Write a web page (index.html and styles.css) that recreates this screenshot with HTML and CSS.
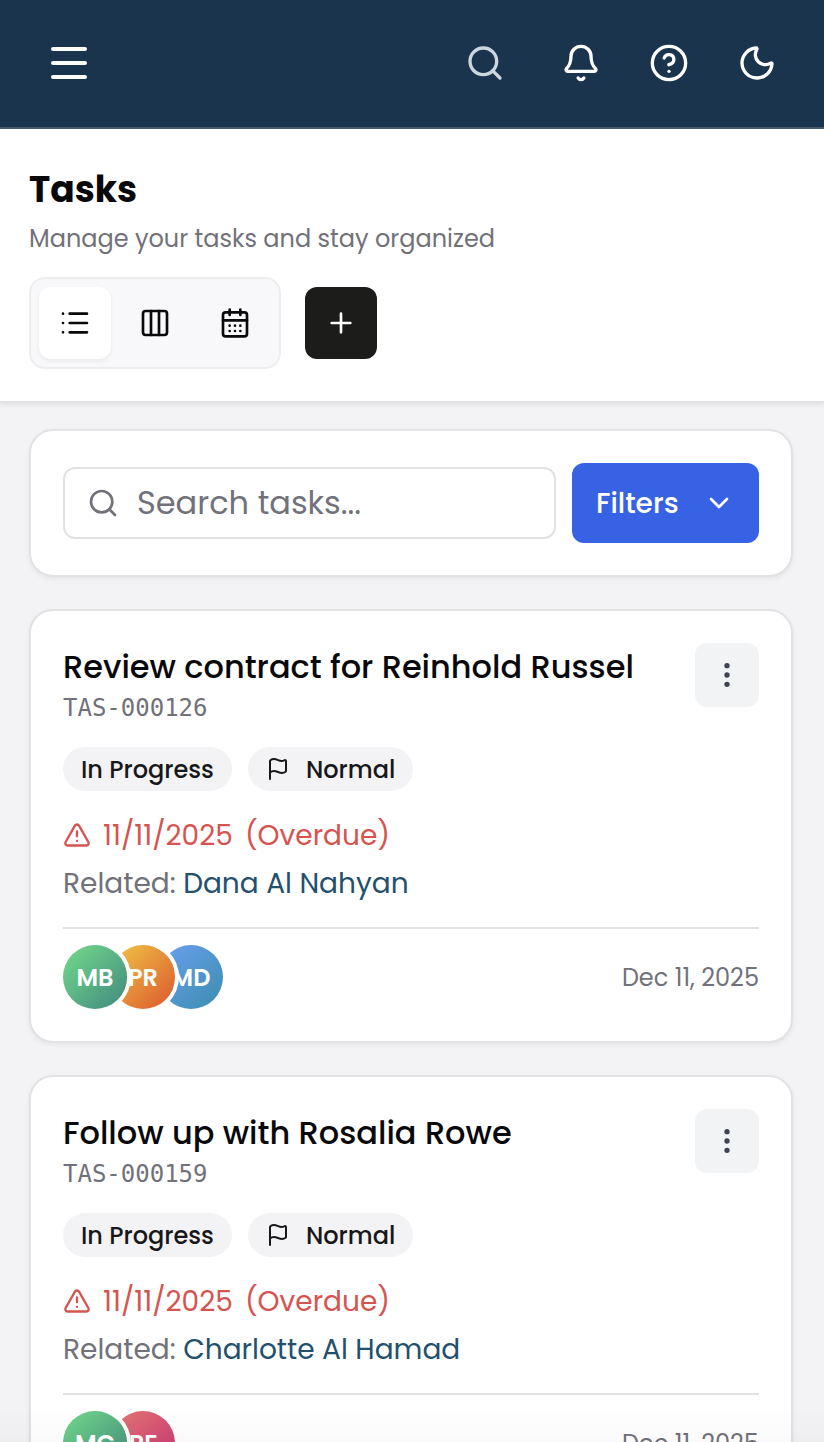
FILE: index.html
```
<!DOCTYPE html>
<html lang="en">
  <head>
    <meta charset="UTF-8" />
    <meta name="viewport" content="width=device-width, initial-scale=1.0" />
    <title>Tasks</title>
    <link rel="stylesheet" href="styles.css">
  </head>
  <body>
    <header class="topbar">
      <button class="menu-toggle" aria-label="Menu">
        <span></span>
        <span></span>
        <span></span>
      </button>
      <div class="topbar-actions">
        <button class="search-btn" aria-label="Search">
          <svg class="icon icon-lg" viewBox="0 0 24 24"><circle cx="11" cy="11" r="8" /><path d="m21 21-4.3-4.3" /></svg>
        </button>
        <button aria-label="Notifications">
          <svg class="icon icon-lg" viewBox="0 0 24 24"><path d="M10.268 21a2 2 0 0 0 3.464 0" /><path d="M3.262 15.326A1 1 0 0 0 4 17h16a1 1 0 0 0 .74-1.673C19.41 13.956 18 12.499 18 8A6 6 0 0 0 6 8c0 4.499-1.411 5.956-2.738 7.326" /></svg>
        </button>
        <button aria-label="Help">
          <svg class="icon icon-lg" viewBox="0 0 24 24"><circle cx="12" cy="12" r="10" /><path d="M9.09 9a3 3 0 0 1 5.83 1c0 2-3 3-3 3" /><path d="M12 17h.01" /></svg>
        </button>
        <button aria-label="Dark mode">
          <svg class="icon icon-lg" viewBox="0 0 24 24"><path d="M20.985 12.486a9 9 0 1 1-9.473-9.472c.405-.022.617.46.402.803a6 6 0 0 0 8.268 8.268c.344-.215.825-.004.803.401" /></svg>
        </button>
      </div>
    </header>

    <section class="page-header">
      <h1>Tasks</h1>
      <p class="subtitle">Manage your tasks and stay organized</p>
      <div class="toolbar">
        <div class="view-switch">
          <button class="active" aria-label="List">
            <svg class="icon" viewBox="0 0 24 24"><path d="M3 5h.01M3 12h.01M3 19h.01M8 5h13M8 12h13M8 19h13" /></svg>
          </button>
          <button aria-label="Board">
            <svg class="icon" viewBox="0 0 24 24"><rect width="18" height="18" x="3" y="3" rx="2" /><path d="M9 3v18M15 3v18" /></svg>
          </button>
          <button aria-label="Calendar">
            <svg class="icon" viewBox="0 0 24 24"><path d="M8 2v4M16 2v4" /><rect width="18" height="18" x="3" y="4" rx="2" /><path d="M3 10h18M8 14h.01M12 14h.01M16 14h.01M8 18h.01M12 18h.01M16 18h.01" /></svg>
          </button>
        </div>
        <button class="add-btn" aria-label="Add task">
          <svg class="icon" viewBox="0 0 24 24"><path d="M5 12h14M12 5v14" /></svg>
        </button>
      </div>
    </section>

    <main class="content">
      <div class="card filter-card">
        <div class="search-box">
          <svg class="icon" viewBox="0 0 24 24"><circle cx="11" cy="11" r="8" /><path d="m21 21-4.3-4.3" /></svg>
          <span>Search tasks...</span>
        </div>
        <button class="filters-btn">
          <span>Filters</span>
          <svg class="icon" viewBox="0 0 24 24"><path d="m6 9 6 6 6-6" /></svg>
        </button>
      </div>

      <article class="card">
        <div class="card-head">
          <div>
            <h2>Review contract for Reinhold Russel</h2>
            <p class="task-id">TAS-000126</p>
          </div>
          <button class="more-btn" aria-label="More">
            <svg class="icon" viewBox="0 0 24 24"><circle cx="12" cy="12" r="1" /><circle cx="12" cy="5" r="1" /><circle cx="12" cy="19" r="1" /></svg>
          </button>
        </div>
        <div class="badges">
          <span class="badge">In Progress</span>
          <span class="badge">
            <svg class="icon icon-sm" viewBox="0 0 24 24"><path d="M4 22V4a1 1 0 0 1 .4-.8A6 6 0 0 1 8 2c3 0 5 2 7.333 2q2 0 3.067-.8A1 1 0 0 1 20 4v10a1 1 0 0 1-.4.8A6 6 0 0 1 16 16c-3 0-5-2-8-2a6 6 0 0 0-4 1.528" /></svg>
            Normal
          </span>
        </div>
        <div class="due">
          <svg class="icon" viewBox="0 0 24 24"><path d="m21.73 18-8-14a2 2 0 0 0-3.48 0l-8 14A2 2 0 0 0 4 21h16a2 2 0 0 0 1.73-3" /><path d="M12 9v4M12 17h.01" /></svg>
          <span>11/11/2025</span>
          <span>(Overdue)</span>
        </div>
        <p class="related">Related: <a>Dana Al Nahyan</a></p>
        <div class="card-foot">
          <div class="avatars">
            <span class="avatar green">MB</span>
            <span class="avatar orange">PR</span>
            <span class="avatar blue">MD</span>
          </div>
          <span class="date">Dec 11, 2025</span>
        </div>
      </article>

      <article class="card">
        <div class="card-head">
          <div>
            <h2>Follow up with Rosalia Rowe</h2>
            <p class="task-id">TAS-000159</p>
          </div>
          <button class="more-btn" aria-label="More">
            <svg class="icon" viewBox="0 0 24 24"><circle cx="12" cy="12" r="1" /><circle cx="12" cy="5" r="1" /><circle cx="12" cy="19" r="1" /></svg>
          </button>
        </div>
        <div class="badges">
          <span class="badge">In Progress</span>
          <span class="badge">
            <svg class="icon icon-sm" viewBox="0 0 24 24"><path d="M4 22V4a1 1 0 0 1 .4-.8A6 6 0 0 1 8 2c3 0 5 2 7.333 2q2 0 3.067-.8A1 1 0 0 1 20 4v10a1 1 0 0 1-.4.8A6 6 0 0 1 16 16c-3 0-5-2-8-2a6 6 0 0 0-4 1.528" /></svg>
            Normal
          </span>
        </div>
        <div class="due">
          <svg class="icon" viewBox="0 0 24 24"><path d="m21.73 18-8-14a2 2 0 0 0-3.48 0l-8 14A2 2 0 0 0 4 21h16a2 2 0 0 0 1.73-3" /><path d="M12 9v4M12 17h.01" /></svg>
          <span>11/11/2025</span>
          <span>(Overdue)</span>
        </div>
        <p class="related">Related: <a>Charlotte Al Hamad</a></p>
        <div class="card-foot">
          <div class="avatars">
            <span class="avatar green">MC</span>
            <span class="avatar pink">RF</span>
          </div>
          <span class="date">Dec 11, 2025</span>
        </div>
      </article>
    </main>
    <div class="bottom-fade"></div>
  </body>
</html>
```
FILE: styles.css
```
* {
  box-sizing: border-box;
  margin: 0;
  padding: 0;
}
body {
  height: 1442px;
  overflow: hidden;
  background-color: #f3f3f5;
  color: #09090b;
  font-family: Poppins, Inter, sans-serif;
}
button {
  display: flex;
  align-items: center;
  justify-content: center;
  border: none;
  background: none;
  color: inherit;
  font: inherit;
  cursor: pointer;
}
.icon {
  width: 32px;
  height: 32px;
  flex-shrink: 0;
  fill: none;
  stroke: currentColor;
  stroke-width: 2;
  stroke-linecap: round;
  stroke-linejoin: round;
}
.icon-lg {
  width: 40px;
  height: 40px;
}
.icon-sm {
  width: 24px;
  height: 24px;
}

/* top bar */
.topbar {
  display: flex;
  align-items: center;
  justify-content: space-between;
  height: 129px;
  padding: 0 31px 2px 33px;
  background-color: #1a344e;
  border-bottom: 2px solid #485a6b;
  color: white;
}
.menu-toggle {
  flex-direction: column;
  gap: 10px;
  width: 72px;
  height: 72px;
}
.menu-toggle span {
  width: 36px;
  height: 4px;
  border-radius: 2px;
  background-color: white;
}
.topbar-actions {
  display: flex;
  gap: 16px;
}
.topbar-actions button {
  width: 72px;
  height: 72px;
}
.topbar-actions .search-btn {
  margin-right: 8px;
  color: #ccd6df;
}

/* page header */
.page-header {
  height: 274px;
  padding: 37px 29px 32px;
  background-color: white;
  border-bottom: 2px solid #e2e2e4;
  box-shadow: 0 2px 5px rgba(0, 0, 0, 0.07);
}
h1 {
  font-size: 36px;
  line-height: 48px;
  font-weight: 700;
}
.subtitle {
  margin-top: 7px;
  color: #71717a;
  font-size: 24px;
  line-height: 35px;
}
.toolbar {
  display: flex;
  align-items: center;
  gap: 24px;
  margin-top: 21px;
}
.view-switch {
  display: flex;
  gap: 8px;
  padding: 8px;
  background-color: #f8f8fb;
  border: 2px solid #ededf0;
  border-radius: 16px;
}
.view-switch button,
.add-btn {
  width: 72px;
  height: 72px;
  border-radius: 12px;
}
.view-switch .active {
  background-color: white;
  box-shadow: 0 2px 4px rgba(0, 0, 0, 0.06);
}
.add-btn {
  background-color: #1c1c1a;
  color: white;
}

/* cards */
.content {
  display: flex;
  flex-direction: column;
  gap: 32px;
  padding: 26px 31px 0 29px;
}
.card {
  padding: 32px;
  background-color: white;
  border: 2px solid #e2e2e5;
  border-radius: 24px;
  box-shadow: 0 2px 5px rgba(0, 0, 0, 0.06);
}
.filter-card {
  display: flex;
  align-items: center;
  gap: 16px;
}
.search-box {
  display: flex;
  flex: 1;
  align-items: center;
  gap: 18px;
  height: 72px;
  padding: 0 22px;
  border: 2px solid #e2e2e5;
  border-radius: 12px;
  color: #71717a;
  font-size: 32px;
}
.filters-btn {
  justify-content: space-between;
  width: 187px;
  height: 80px;
  padding: 0 24px;
  border-radius: 12px;
  background-color: #3762e3;
  color: white;
  font-size: 28px;
  font-weight: 500;
}
.filters-btn span {
  padding-top: 2px;
}
.card-head {
  display: flex;
  align-items: flex-start;
  justify-content: space-between;
}
h2 {
  font-size: 32px;
  line-height: 48px;
  font-weight: 500;
}
.task-id {
  margin-top: 1px;
  color: #71717a;
  font-family: "DejaVu Sans Mono", monospace;
  font-size: 24px;
  line-height: 32px;
}
.more-btn {
  width: 64px;
  height: 64px;
  border-radius: 12px;
  background-color: #f2f3f5;
  color: #3f4350;
}
.badges {
  display: flex;
  gap: 16px;
  margin-top: 23px;
}
.badge {
  display: flex;
  align-items: center;
  gap: 16px;
  height: 44px;
  padding: 0 18px;
  border-radius: 22px;
  background-color: #f3f3f5;
  color: #18181b;
  font-size: 24px;
  font-weight: 500;
}
.due {
  display: flex;
  align-items: center;
  gap: 12px;
  height: 40px;
  margin-top: 24px;
  color: #d6544f;
  font-size: 28px;
}
.due .icon {
  width: 28px;
  height: 28px;
}
.due span {
  padding-top: 2px;
}
.related {
  margin-top: 9px;
  color: #71717a;
  font-size: 28px;
  line-height: 40px;
}
.related a {
  color: #23506c;
}
.card-foot {
  display: flex;
  align-items: center;
  justify-content: space-between;
  margin-top: 23px;
  padding-top: 16px;
  border-top: 2px solid #e2e2e5;
}
.avatars {
  display: flex;
  isolation: isolate;
}
.avatar {
  display: flex;
  align-items: center;
  justify-content: center;
  position: relative;
  width: 64px;
  height: 64px;
  border-radius: 50%;
  box-shadow: 0 0 0 4px white;
  color: white;
  font-size: 24px;
  font-weight: 600;
}
.avatar + .avatar {
  margin-left: -16px;
}
.avatar:nth-child(1) {
  z-index: 3;
}
.avatar:nth-child(2) {
  z-index: 2;
}
.avatar:nth-child(3) {
  z-index: 1;
}
.green {
  background: linear-gradient(135deg, #74db8a, #40897f);
}
.orange {
  background: linear-gradient(135deg, #f0c846, #db562e);
}
.blue {
  background: linear-gradient(135deg, #6ba0ee, #3a8db0);
}
.pink {
  background: linear-gradient(135deg, #e57a75, #c72f72);
}
.date {
  color: #71717a;
  font-size: 24px;
}

/* soft edge at the bottom of the screen */
.bottom-fade {
  position: fixed;
  left: 0;
  right: 0;
  bottom: 0;
  z-index: 10;
  height: 36px;
  background: linear-gradient(rgba(0, 0, 0, 0), rgba(0, 0, 0, 0.018));
  pointer-events: none;
}
```
